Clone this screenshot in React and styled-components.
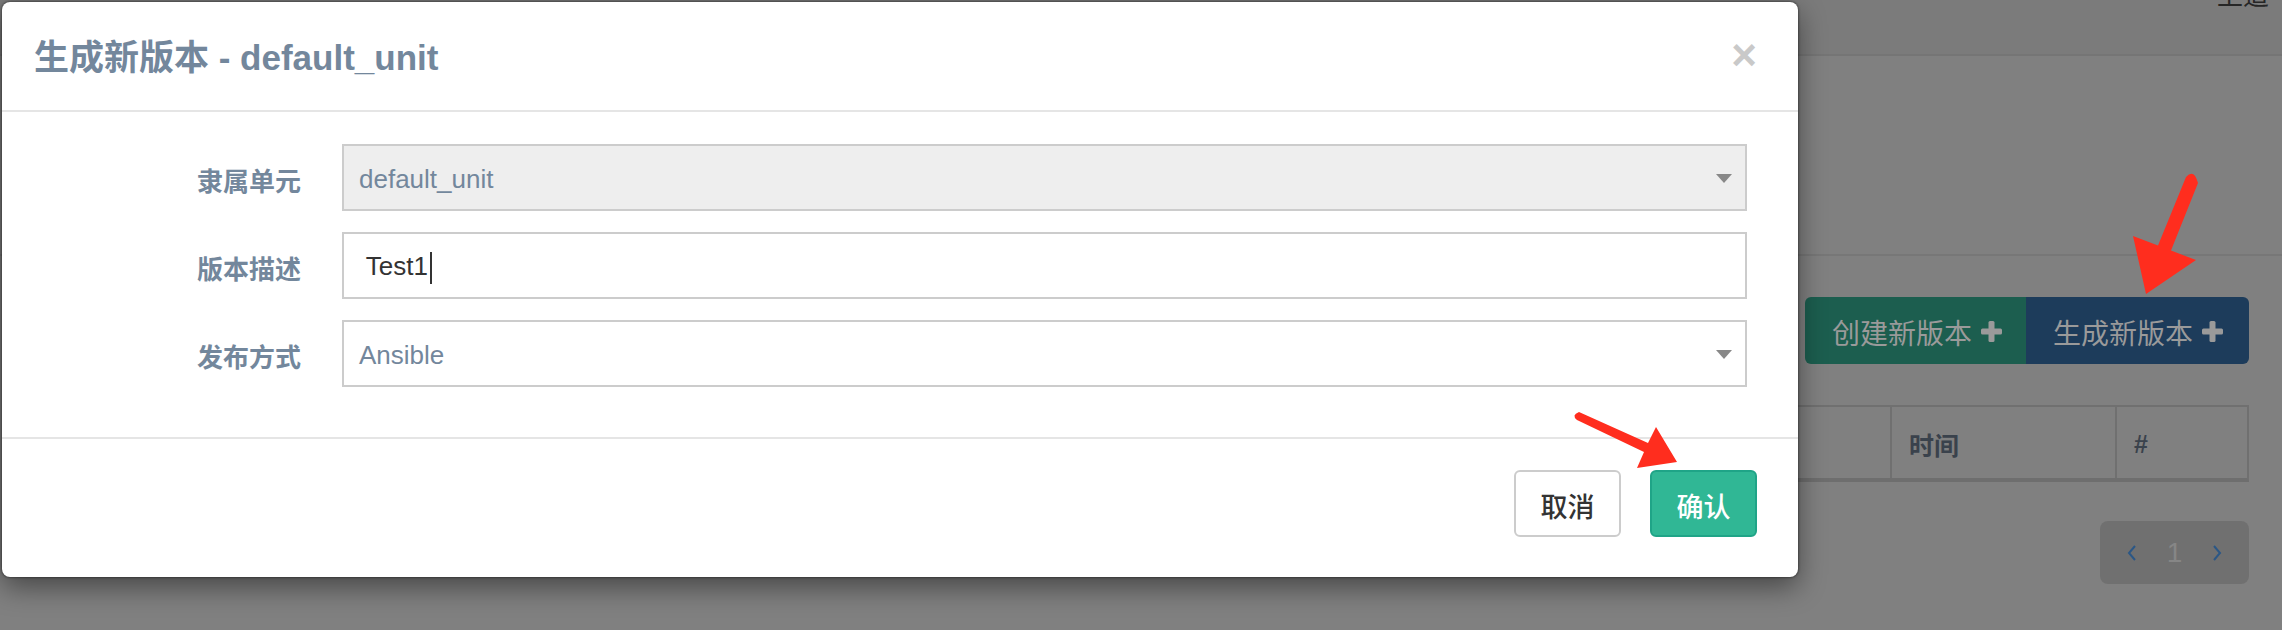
import React from "react";
import styled, { createGlobalStyle } from "styled-components";

const GlobalStyle = createGlobalStyle`
    html, body {
        margin: 0;
        padding: 0;
    }
    body {
        background: #808080;
        font-family: "Liberation Sans", "Noto Sans CJK SC", sans-serif;
    }
    * {
        box-sizing: border-box;
    }
`;

const Screen = styled.div`
    position: relative;
    width: 2282px;
    height: 630px;
    overflow: hidden;
    background: #808080;
`;

// page behind the backdrop (already dimmed colours)
const Page = styled.div`
    display: flex;
    flex-direction: column;
    height: 100%;
`;

const TopBar = styled.div`
    height: 56px;
    background: #7b7b7b;
    border-bottom: 2px solid #757575;
    display: flex;
    justify-content: flex-end;
    padding-right: 13px;
    overflow: hidden;
`;

const TopText = styled.span`
    font-size: 26px;
    line-height: 30px;
    margin-top: -19px;
    color: #262626;
`;

const Panel = styled.div`
    height: 200px;
    border-bottom: 2px solid #777;
`;

const Toolbar = styled.div`
    display: flex;
    justify-content: flex-end;
    padding: 41px 33px 0 0;
`;

const BtnGroup = styled.div`
    display: flex;
    border-radius: 6px;
    overflow: hidden;
`;

const BgButton = styled.div`
    height: 67px;
    display: flex;
    align-items: center;
    gap: 9px;
    padding: 2px ${props => props.$tone === 'blue' ? '26px' : '24px'} 0 27px;
    font-size: 28px;
    color: #9a9a9a;
    background: ${props => props.$tone === 'blue' ? '#1d3c5b' : '#1c5e4f'};
`;

const Table = styled.div`
    display: grid;
    grid-template-columns: 1fr 225px 132px;
    margin: 41px 33px 0 40px;
    height: 77px;
    border-top: 2px solid #707070;
    border-bottom: 4px solid #6e6e6e;
    border-right: 2px solid #707070;
`;

const HeadCell = styled.div`
    display: flex;
    align-items: center;
    padding: 3px 0 0 17px;
    border-left: 2px solid #707070;
    font-size: 25px;
    font-weight: bold;
    color: #3a424c;
`;

const Pager = styled.div`
    align-self: flex-end;
    margin: 39px 33px 0 0;
    width: 149px;
    height: 63px;
    border-radius: 8px;
    background: #707070;
    display: flex;
    align-items: center;
    justify-content: space-around;
    padding: 0 12px;
`;

const PageNum = styled.span`
    font-size: 28px;
    color: #868686;
`;

// modal
const Modal = styled.div`
    position: absolute;
    top: 2px;
    left: 2px;
    width: 1796px;
    background: #fff;
    border-radius: 8px;
    box-shadow: 0 0 3px rgba(0, 0, 0, 0.7), 0 10px 28px rgba(0, 0, 0, 0.45);
    color: #73879c;
`;

const ModalHeader = styled.div`
    display: flex;
    align-items: center;
    justify-content: space-between;
    padding: 32px 41px 28px 32px;
    border-bottom: 2px solid #e5e5e5;
`;

const Title = styled.h4`
    margin: 0;
    font-size: 35px;
    line-height: 48px;
    font-weight: 600;
    color: #73879c;
`;

const Close = styled.span`
    font-size: 44px;
    line-height: 44px;
    font-weight: bold;
    color: #c9c9c9;
    margin-top: -6px;
`;

const ModalBody = styled.div`
    display: grid;
    grid-template-columns: 299px 1405px;
    column-gap: 41px;
    row-gap: 21px;
    padding: 32px 0 50px;
`;

const Label = styled.label`
    display: flex;
    align-items: center;
    justify-content: flex-end;
    padding-top: 4px;
    font-size: 26px;
    font-weight: bold;
    color: #73879c;
`;

const Field = styled.div`
    height: 67px;
    display: flex;
    align-items: center;
    justify-content: space-between;
    padding: 4px 13px 0 15px;
    border: 2px solid #ccc;
    background: ${props => props.$disabled ? '#eeeeee' : '#fff'};
    font-size: 26px;
    color: ${props => props.$typed ? '#333' : '#73879c'};
    white-space: pre;
`;

const Caret = styled.span`
    display: inline-block;
    width: 2px;
    height: 32px;
    margin-left: 2px;
    vertical-align: middle;
    background: #333;
`;

const SelectArrow = styled.span`
    width: 0;
    height: 0;
    margin-top: -3px;
    border-left: 8px solid transparent;
    border-right: 8px solid transparent;
    border-top: 9px solid #888;
`;

const ModalFooter = styled.div`
    display: flex;
    justify-content: flex-end;
    gap: 29px;
    padding: 31px 41px 40px;
    border-top: 2px solid #e5e5e5;
`;

const Button = styled.button`
    width: 107px;
    height: 67px;
    border-radius: 6px;
    font-family: inherit;
    font-size: 27px;
    border: 2px solid ${props => props.$primary ? '#1fa487' : '#ccc'};
    background: ${props => props.$primary ? '#30b795' : '#fff'};
    color: ${props => props.$primary ? '#fff' : '#333'};
    font-weight: 500;
    padding: 3px 0 0;
`;

const Annotations = styled.svg`
    position: absolute;
    top: 0;
    left: 0;
    pointer-events: none;
`;

const PlusIcon = () => (
    <svg width="21" height="21" viewBox="0 0 21 21">
        <rect x="7.5" y="0" width="6" height="21" rx="1.5" fill="currentColor" />
        <rect x="0" y="7.5" width="21" height="6" rx="1.5" fill="currentColor" />
    </svg>
);

const Chevron = ({dir}) => (
    <svg width="10" height="16" viewBox="0 0 10 16">
        <polyline points={dir === 'left' ? '8,1 2,8 8,15' : '2,1 8,8 2,15'}
                  fill="none" stroke="#2b5786" strokeWidth="2" />
    </svg>
);

const rows = [
    {label: '隶属单元', value: 'default_unit', select: true, disabled: true},
    {label: '版本描述', value: ' Test1', typed: true},
    {label: '发布方式', value: 'Ansible', select: true},
];

const App = () => {
    return (
        <Screen>
            <GlobalStyle />
            <Page>
                <TopBar><TopText>上道</TopText></TopBar>
                <Panel />
                <Toolbar>
                    <BtnGroup>
                        <BgButton $tone='green'>创建新版本 <PlusIcon /></BgButton>
                        <BgButton $tone='blue'>生成新版本 <PlusIcon /></BgButton>
                    </BtnGroup>
                </Toolbar>
                <Table>
                    <HeadCell>版本</HeadCell>
                    <HeadCell>时间</HeadCell>
                    <HeadCell>#</HeadCell>
                </Table>
                <Pager>
                    <Chevron dir='left' />
                    <PageNum>1</PageNum>
                    <Chevron dir='right' />
                </Pager>
            </Page>

            <Modal>
                <ModalHeader>
                    <Title>生成新版本 - default_unit</Title>
                    <Close>×</Close>
                </ModalHeader>
                <ModalBody>
                    {rows.map(row => (
                        <React.Fragment key={row.label}>
                            <Label>{row.label}</Label>
                            <Field $disabled={row.disabled} $typed={row.typed}>
                                <span>{row.value}{row.typed && <Caret />}</span>
                                {row.select && <SelectArrow />}
                            </Field>
                        </React.Fragment>
                    ))}
                </ModalBody>
                <ModalFooter>
                    <Button>取消</Button>
                    <Button $primary>确认</Button>
                </ModalFooter>
            </Modal>

            <Annotations width="2282" height="630" viewBox="0 0 2282 630">
                <path d="M2186,177 Q2194,168 2198,183 L2171,250.6 L2196,260 L2146,294 L2133,236 L2158,245.4 Z"
                      fill="#ff2d1e" />
                <path d="M1579,412 L1648,443 L1656,427 L1677,462 L1637,468 L1644,452 L1577,420 Q1571,415 1579,412 Z"
                      fill="#ff2d1e" />
            </Annotations>
        </Screen>
    );
};

export default App;
